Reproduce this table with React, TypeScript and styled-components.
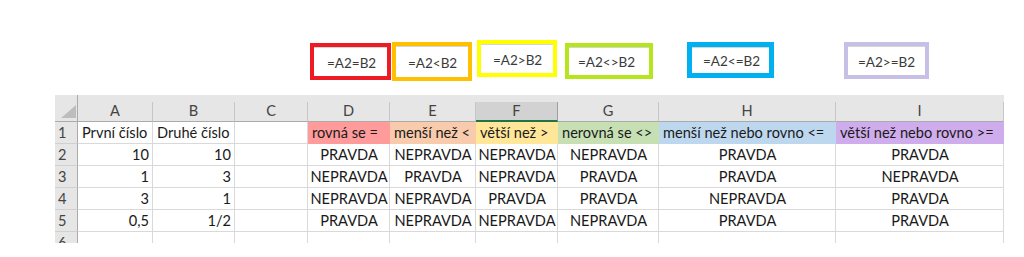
import React from 'react';
import styled, { createGlobalStyle } from 'styled-components';

const GlobalStyle = createGlobalStyle`
  html, body {
    margin: 0;
    padding: 0;
    background: #ffffff;
  }
  body {
    font-family: Lato, 'Open Sans', sans-serif;
  }
`;

const Page = styled.div`
  width: 1024px;
  height: 257px;
  overflow: hidden;
  display: flex;
  flex-direction: column;
`;

const FormulaRow = styled.div`
  display: flex;
  align-items: flex-start;
  height: 95px;
`;

const FormulaBox = styled.div<{ $color: string; $left: number; $top: number; $w: number; $h: number; $bw: number }>`
  box-sizing: border-box;
  margin-left: ${(p) => p.$left}px;
  margin-top: ${(p) => p.$top}px;
  width: ${(p) => p.$w}px;
  height: ${(p) => p.$h}px;
  border: ${(p) => p.$bw}px solid ${(p) => p.$color};
  display: flex;
`;

const FormulaInner = styled.div<{ $pad: number }>`
  flex: 1;
  border-top: 1px solid #d4d4d4;
  display: flex;
  align-items: center;
  padding-left: ${(p) => p.$pad}px;
  padding-top: 1px;
  font-size: 13.5px;
  color: #3a3a3a;
  white-space: nowrap;
`;

const COLS = [23, 75, 82, 73, 82, 86, 82, 101, 177, 168];

const Sheet = styled.div`
  margin-left: 55px;
  width: 949px;
  height: 148px;
  overflow: hidden;
  display: grid;
  grid-template-columns: ${COLS.map((c) => `${c}px`).join(' ')};
  grid-auto-rows: 22px;
  grid-template-rows: 7px 20px;
  font-size: 14.6px;
`;

const TopBand = styled.div`
  grid-column: 1 / -1;
  background: #e6e6e6;
`;

const Corner = styled.div`
  position: relative;
  background: #e6e6e6;
  border-right: 1px solid #ababab;
  border-bottom: 1px solid #ababab;
  margin-top: -7px;
  height: 27px;
  box-sizing: border-box;
  display: flex;
  align-items: flex-end;
  justify-content: flex-end;
  padding: 0 1px 3px 0;
`;

const ColHead = styled.div<{ $selected?: boolean }>`
  box-sizing: border-box;
  background: ${(p) => (p.$selected ? '#d2d2d2' : '#e6e6e6')};
  border-right: 1px solid ${(p) => (p.$selected ? '#9f9f9f' : '#c6c6c6')};
  border-bottom: ${(p) => (p.$selected ? '2px solid #217346' : '1px solid #ababab')};
  display: flex;
  align-items: center;
  justify-content: center;
  color: #444444;
  line-height: 1;
`;

const RowHead = styled.div`
  box-sizing: border-box;
  background: #e6e6e6;
  border-right: 1px solid #ababab;
  border-bottom: 1px solid #d0d0d0;
  display: flex;
  align-items: center;
  padding-left: 3px;
  color: #444444;
`;

const Cell = styled.div<{ $align?: 'left' | 'right' | 'center'; $fill?: string }>`
  box-sizing: border-box;
  background: ${(p) => p.$fill || '#ffffff'};
  border-right: 1px solid ${(p) => p.$fill || '#d9d9d9'};
  border-bottom: 1px solid ${(p) => p.$fill || '#d9d9d9'};
  display: flex;
  align-items: center;
  justify-content: ${(p) => (p.$align === 'right' ? 'flex-end' : p.$align === 'center' ? 'center' : 'flex-start')};
  padding: 0 3px 0 4px;
  color: #1a1a1a;
  white-space: nowrap;
  overflow: hidden;
`;

const formulas = [
  { text: '=A2=B2', color: '#ed1c24', left: 310, top: 43, w: 81, h: 37, bw: 4, pad: 13 },
  { text: '=A2<B2', color: '#ffc000', left: 1, top: 42, w: 80, h: 39, bw: 4, pad: 12 },
  { text: '=A2>B2', color: '#ffff00', left: 5, top: 40, w: 80, h: 37, bw: 4, pad: 12 },
  { text: '=A2<>B2', color: '#b5e61d', left: 8, top: 43, w: 88, h: 36, bw: 4, pad: 9 },
  { text: '=A2<=B2', color: '#00b0f0', left: 34, top: 42, w: 87, h: 36, bw: 5, pad: 11 },
  { text: '=A2>=B2', color: '#c8bfe7', left: 70, top: 42, w: 85, h: 37, bw: 4, pad: 10 },
];

const letters = ['A', 'B', 'C', 'D', 'E', 'F', 'G', 'H', 'I'];

const fills = ['#ff9b9b', '#f8cbad', '#ffe699', '#c6e0b4', '#bdd7ee', '#cfaceb'];
const titles = ['rovná se =', 'menší než <', 'větší než >', 'nerovná se <>', 'menší než nebo rovno <=', 'větší než nebo rovno >='];

const P = 'PRAVDA';
const N = 'NEPRAVDA';
const data: [string, string, string[]][] = [
  ['10', '10', [P, N, N, N, P, P]],
  ['1', '3', [N, P, N, P, P, N]],
  ['3', '1', [N, N, P, P, N, P]],
  ['0,5', '1/2', [P, N, N, N, P, P]],
];

const App = () => (
  <Page>
    <GlobalStyle />
    <FormulaRow>
      {formulas.map((f) => (
        <FormulaBox key={f.text} $color={f.color} $left={f.left} $top={f.top} $w={f.w} $h={f.h} $bw={f.bw}>
          <FormulaInner $pad={f.pad}>{f.text}</FormulaInner>
        </FormulaBox>
      ))}
    </FormulaRow>
    <Sheet>
      <TopBand />
      <Corner>
        <svg width="15" height="13" viewBox="0 0 15 13">
          <polygon points="15,0 15,13 0,13" fill="#bdbdbd" />
        </svg>
      </Corner>
      {letters.map((l) => (
        <ColHead key={l} $selected={l === 'F'}>
          {l}
        </ColHead>
      ))}

      <RowHead>1</RowHead>
      <Cell>První číslo</Cell>
      <Cell>Druhé číslo</Cell>
      <Cell />
      {titles.map((t, i) => (
        <Cell key={t} $fill={fills[i]}>
          {t}
        </Cell>
      ))}

      {data.map(([a, b, res], r) => (
        <React.Fragment key={r}>
          <RowHead>{r + 2}</RowHead>
          <Cell $align="right">{a}</Cell>
          <Cell $align="right">{b}</Cell>
          <Cell />
          {res.map((v, i) => (
            <Cell key={i} $align="center">
              {v}
            </Cell>
          ))}
        </React.Fragment>
      ))}

      <RowHead>6</RowHead>
      {letters.map((l) => (
        <Cell key={l} />
      ))}
    </Sheet>
  </Page>
);

export default App;
